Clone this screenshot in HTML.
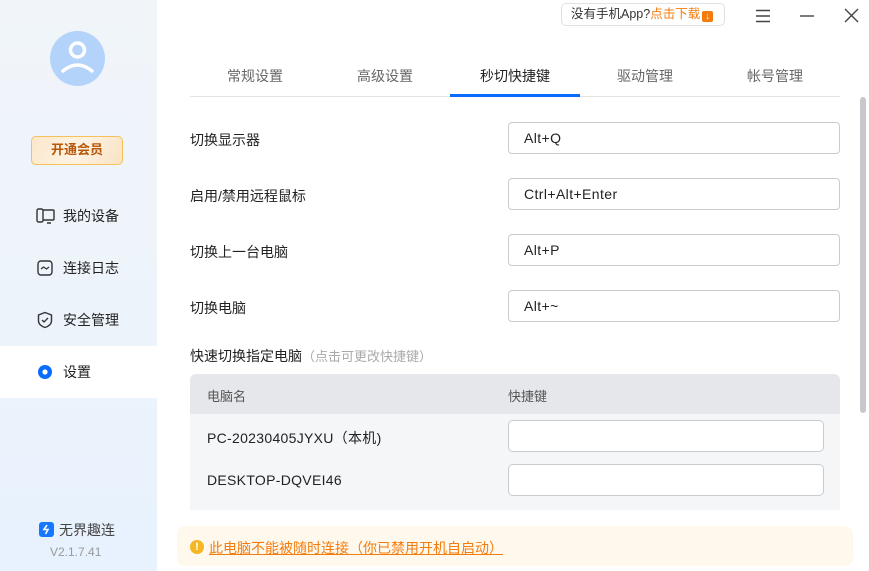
<!DOCTYPE html>
<html><head><meta charset="utf-8"><style>
*{margin:0;padding:0;box-sizing:border-box}
body{width:869px;height:571px;overflow:hidden;background:#fff;font-family:"Liberation Sans","Noto Sans CJK SC",sans-serif;position:relative;color:#222}
.side{position:absolute;left:0;top:0;width:157px;height:571px;background:linear-gradient(180deg,#f1f5f9 0%,#ecf3fb 60%,#e7f2fe 100%)}
.abs{position:absolute}
.nav{position:absolute;left:0;width:157px;height:52px;font-size:14px;display:flex;align-items:center;padding-left:63px;color:#222}
.nav svg{position:absolute;left:36px}
.tab{position:absolute;top:66px;width:130px;text-align:center;font-size:14px;color:#666}
.lab{position:absolute;left:190px;font-size:14px;color:#222}
.inp{position:absolute;left:508px;width:332px;height:32px;border:1px solid #c9cbd1;border-radius:4px;font-size:14px;padding-left:15px;line-height:30px;color:#222;letter-spacing:0.4px}
</style></head><body>
<div class="side">
  <div class="abs" style="left:50px;top:31px;width:55px;height:55px;border-radius:50%;background:#b3d3fb">
    <svg width="55" height="55" viewBox="0 0 55 55"><circle cx="27.5" cy="19" r="7" fill="none" stroke="#fff" stroke-width="3.5"/><path d="M13 40 Q27.5 28 42 40" fill="none" stroke="#fff" stroke-width="3.5" stroke-linecap="round"/></svg>
  </div>
  <div class="abs" style="left:31px;top:136px;width:92px;height:29px;border:1.5px solid #f6c15a;border-radius:5px;background:linear-gradient(120deg,#fbe7cb,#fdf3e3 50%,#f9e2c3);color:#b8580a;font-size:13px;font-weight:bold;text-align:center;line-height:26px">开通会员</div>
  <div class="nav" style="top:190px"><svg width="20" height="16" viewBox="0 0 20 16"><rect x="1" y="1" width="6" height="13" rx="1.5" fill="none" stroke="#333" stroke-width="1.4"/><path d="M7 2h10a1 1 0 0 1 1 1v8a1 1 0 0 1-1 1H7M11 15h4" fill="none" stroke="#333" stroke-width="1.4"/></svg>我的设备</div>
  <div class="nav" style="top:242px"><svg width="18" height="18" viewBox="0 0 18 18"><rect x="2" y="2" width="14" height="14" rx="3" fill="none" stroke="#333" stroke-width="1.4"/><path d="M5 10l2.5-2 3 2 2.5-2" fill="none" stroke="#333" stroke-width="1.3"/></svg>连接日志</div>
  <div class="nav" style="top:294px"><svg width="18" height="18" viewBox="0 0 18 18"><path d="M9 1.5L15.5 4v6c0 3-3 5.5-6.5 6.5C5.5 15.5 2.5 13 2.5 10V4z" fill="none" stroke="#333" stroke-width="1.4"/><path d="M6 9l2 2 4-4" fill="none" stroke="#333" stroke-width="1.3"/></svg>安全管理</div>
  <div class="nav" style="top:346px;background:#fff"><svg width="18" height="18" viewBox="0 0 18 18"><circle cx="9" cy="9" r="7" fill="#0a6cff"/><circle cx="9" cy="9" r="2.6" fill="#fff"/></svg>设置</div>
  <div class="abs" style="left:39px;top:522px;width:15px;height:15px;border-radius:3px;background:#1677ff"><svg width="15" height="15" viewBox="0 0 15 15"><path d="M8 3L5 7.5h4L6.5 12" fill="none" stroke="#fff" stroke-width="1.6"/></svg></div>
  <div class="abs" style="left:59px;top:520px;font-size:14px;color:#444">无界趣连</div>
  <div class="abs" style="left:50px;top:545px;font-size:12px;color:#999">V2.1.7.41</div>
</div>
<div class="abs" style="left:561px;top:3px;width:164px;height:23px;border:1px solid #dfe1e5;border-radius:5px;font-size:12.5px;color:#333;line-height:21px;padding-left:9px;white-space:nowrap">没有手机App?<span style="color:#f47c0e">点击下载</span><span style="display:inline-block;width:11px;height:11px;background:#f47c0e;border-radius:2px;margin-left:2px;vertical-align:-1px;color:#fff;font-size:9px;line-height:11px;text-align:center">↓</span></div>
<svg class="abs" style="left:755px;top:9px" width="16" height="14"><path d="M1 1.5h14M1 7h14M1 12.5h14" stroke="#444" stroke-width="1.4"/></svg>
<svg class="abs" style="left:799px;top:9px" width="16" height="14"><path d="M1 7h14" stroke="#444" stroke-width="1.4"/></svg>
<svg class="abs" style="left:844px;top:8px" width="15" height="15"><path d="M1 1l13 13M14 1L1 14" stroke="#444" stroke-width="1.4"/></svg>
<div class="tab" style="left:190px">常规设置</div>
<div class="tab" style="left:320px">高级设置</div>
<div class="tab" style="left:450px;color:#222">秒切快捷键</div>
<div class="tab" style="left:580px">驱动管理</div>
<div class="tab" style="left:710px">帐号管理</div>
<div class="abs" style="left:190px;top:96px;width:650px;height:1px;background:#e3e4e8"></div>
<div class="abs" style="left:450px;top:94px;width:130px;height:3px;background:#0a6cff"></div>
<div class="abs" style="left:860px;top:97px;width:6px;height:316px;border-radius:3px;background:#c6c8cc"></div>
<div class="lab" style="top:130px">切换显示器</div><div class="inp" style="top:122px">Alt+Q</div>
<div class="lab" style="top:186px">启用/禁用远程鼠标</div><div class="inp" style="top:178px">Ctrl+Alt+Enter</div>
<div class="lab" style="top:242px">切换上一台电脑</div><div class="inp" style="top:234px">Alt+P</div>
<div class="lab" style="top:298px">切换电脑</div><div class="inp" style="top:290px">Alt+~</div>
<div class="lab" style="top:346px">快速切换指定电脑<span style="color:#aaa;font-size:13px">（点击可更改快捷键）</span></div>
<div class="abs" style="left:190px;top:374px;width:650px;height:136px;background:#f5f6f8;border-radius:6px 6px 0 0;overflow:hidden">
  <div style="height:40px;background:#e6e7eb;font-size:13px;color:#555;position:relative"><span class="abs" style="left:17px;top:12px">电脑名</span><span class="abs" style="left:318px;top:12px">快捷键</span></div>
  <div class="abs" style="left:17px;top:54px;font-size:14px;letter-spacing:0.3px">PC-20230405JYXU（本机)</div>
  <div class="abs" style="left:318px;top:46px;width:316px;height:32px;background:#fff;border:1px solid #c9cbd1;border-radius:5px"></div>
  <div class="abs" style="left:17px;top:98px;font-size:14px;letter-spacing:0.3px">DESKTOP-DQVEI46</div>
  <div class="abs" style="left:318px;top:90px;width:316px;height:32px;background:#fff;border:1px solid #c9cbd1;border-radius:5px"></div>
</div>
<div class="abs" style="left:177px;top:526px;width:676px;height:40px;background:#fff8ec;border-radius:8px"></div>
<div class="abs" style="left:190px;top:540px;width:14px;height:14px;border-radius:50%;background:#f5b623;color:#fff;font-size:11px;font-weight:bold;text-align:center;line-height:14px">!</div>
<div class="abs" style="left:209px;top:538px;font-size:14px;color:#f47c0e;text-decoration:underline">此电脑不能被随时连接（你已禁用开机自启动）</div>
</body></html>
